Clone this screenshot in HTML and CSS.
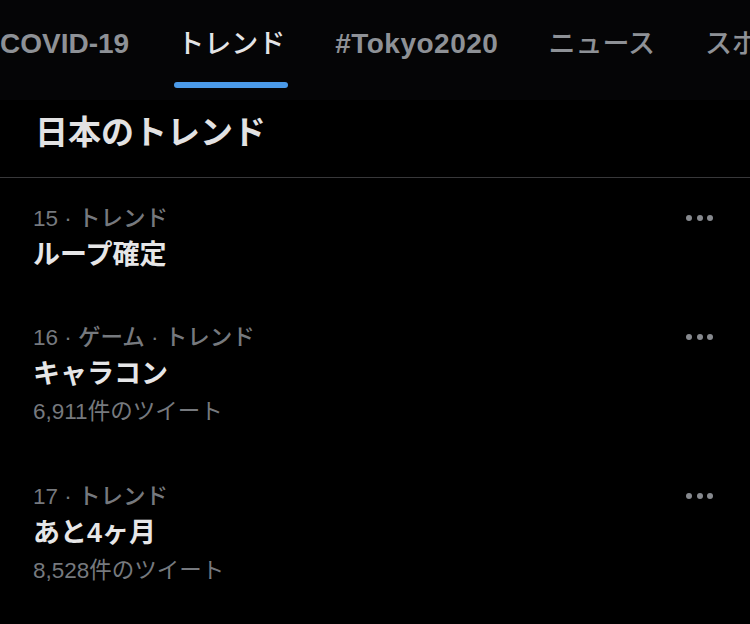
FILE: index.html
```html
<!DOCTYPE html>
<html lang="ja">
<head>
<meta charset="utf-8">
<title>トレンド</title>
<link rel="stylesheet" href="styles.css">
</head>
<body>
<nav class="tabs">
  <div class="tab tab-latin tab-covid">COVID-19</div>
  <div class="tab tab-active"><span class="tab-label">トレンド</span><span class="tab-bar"></span></div>
  <div class="tab tab-latin tab-tokyo">#Tokyo2020</div>
  <div class="tab">ニュース</div>
  <div class="tab">スポーツ</div>
</nav>
<section class="heading-wrap">
  <h1 class="heading">日本のトレンド</h1>
</section>
<ul class="trends">
  <li class="trend">
    <div class="trend-body">
      <div class="meta">15 · トレンド</div>
      <div class="title">ループ確定</div>
    </div>
    <div class="more"><span></span><span></span><span></span></div>
  </li>
  <li class="trend">
    <div class="trend-body">
      <div class="meta">16 · ゲーム · トレンド</div>
      <div class="title">キャラコン</div>
      <div class="count">6,911件のツイート</div>
    </div>
    <div class="more"><span></span><span></span><span></span></div>
  </li>
  <li class="trend">
    <div class="trend-body">
      <div class="meta">17 · トレンド</div>
      <div class="title">あと4ヶ月</div>
      <div class="count">8,528件のツイート</div>
    </div>
    <div class="more"><span></span><span></span><span></span></div>
  </li>
</ul>
</body>
</html>
```
FILE: styles.css
```css
html, body {
  margin: 0;
  padding: 0;
  background: #000;
}
body {
  width: 750px;
  height: 624px;
  overflow: hidden;
  font-family: "Liberation Sans", "Noto Sans CJK JP", sans-serif;
  color: #e6e6e7;
}
.tabs {
  display: flex;
  gap: 50px;
  height: 100px;
  background: #050506;
  white-space: nowrap;
  overflow: hidden;
}
.tab {
  flex: none;
  display: flex;
  flex-direction: column;
  padding-top: 22px;
  font-size: 27px;
  line-height: 44px;
  font-weight: 500;
  color: #8e9196;
}
.tab-latin {
  font-size: 28px;
  font-weight: 700;
}
.tab-covid {
  margin-right: -2px;
}
.tab-tokyo {
  letter-spacing: 0.5px;
}
.tab-active {
  color: #e4e4e6;
}
.tab-bar {
  display: block;
  height: 6px;
  margin: 16px -3px 0;
  border-radius: 3px;
  background: #4b9ae8;
}
.heading-wrap {
  height: 78px;
  border-bottom: 1px solid #38383a;
  box-sizing: border-box;
  padding: 11px 0 0 35px;
}
.heading {
  margin: 0;
  font-size: 33px;
  line-height: 44px;
  font-weight: 700;
  color: #e2e2e3;
}
.trends {
  list-style: none;
  margin: 0;
  padding: 0;
}
.trend {
  display: flex;
  justify-content: space-between;
  align-items: flex-start;
  padding: 23px 37px 24px 33px;
}
.meta {
  font-size: 22.5px;
  line-height: 36px;
  font-weight: 500;
  color: #76797e;
}
.title {
  font-size: 27px;
  line-height: 36px;
  font-weight: 700;
  color: #e6e6e7;
}
.count {
  font-size: 22.5px;
  line-height: 40px;
  color: #76797e;
}
.more {
  display: flex;
  align-items: center;
  gap: 4.5px;
  height: 34px;
}
.more span {
  width: 6px;
  height: 6px;
  border-radius: 50%;
  background: #86898e;
}
```
